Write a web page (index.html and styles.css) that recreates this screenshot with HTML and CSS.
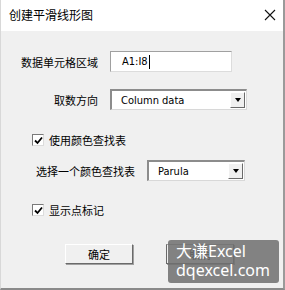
FILE: index.html
```html
<!DOCTYPE html>
<html>
<head>
<meta charset="utf-8">
<link rel="stylesheet" href="styles.css">
</head>
<body>
<div class="window">
  <div class="titlebar">
    <span class="title">创建平滑线形图</span>
    <svg class="close" width="12" height="12" viewBox="0 0 12 12"><path d="M1 1 L11 11 M11 1 L1 11" stroke="#111" stroke-width="1.1" fill="none"/></svg>
  </div>
  <div class="content">
    <div class="row row-range">
      <span class="label">数据单元格区域</span>
      <div class="textbox"><span class="val">A1:I8</span><span class="caret"></span></div>
    </div>
    <div class="row row-dir">
      <span class="label">取数方向</span>
      <div class="combo combo-wide"><span class="val">Column data</span><span class="drop"><span class="tri"></span></span></div>
    </div>
    <div class="check check-lut">
      <span class="box"><svg width="9" height="9" viewBox="0 0 9 9"><path d="M1 4.5 L3.5 7 L8 1.5" stroke="#000" stroke-width="1.8" fill="none"/></svg></span>
      <span class="ctext">使用颜色查找表</span>
    </div>
    <div class="row row-lut">
      <span class="label">选择一个颜色查找表</span>
      <div class="combo combo-narrow"><span class="val">Parula</span><span class="drop"><span class="tri"></span></span></div>
    </div>
    <div class="check check-mark">
      <span class="box"><svg width="9" height="9" viewBox="0 0 9 9"><path d="M1 4.5 L3.5 7 L8 1.5" stroke="#000" stroke-width="1.8" fill="none"/></svg></span>
      <span class="ctext">显示点标记</span>
    </div>
    <div class="buttons">
      <div class="btn btn-ok">确定</div>
      <div class="btn btn-cancel">取消</div>
    </div>
    <div class="watermark"><span>大谦Excel</span><span>dqexcel.com</span></div>
  </div>
</div>
</body>
</html>
```

FILE: styles.css
```css
* { box-sizing: border-box; }
html, body { margin: 0; padding: 0; }
body {
  width: 285px;
  height: 290px;
  overflow: hidden;
  background: #f0f0f0;
  font-family: "Noto Sans CJK SC", "Noto Sans", sans-serif;
  color: #000;
}
.window {
  width: 285px;
  height: 290px;
  display: flex;
  flex-direction: column;
  border-right: 2px solid #9a9a9a;
  border-bottom: 2px solid #8a8a8a;
  border-left: 1px solid #d8d8d8;
}
.titlebar {
  height: 31px;
  background: #fff;
  display: flex;
  align-items: center;
  justify-content: space-between;
  padding: 0 7px 1px 8px;
  flex: none;
}
.title { font-size: 12px; line-height: 14px; }
.close { display: block; }
.content {
  flex: 1;
  position: relative;
  padding-top: 20px;
  display: flex;
  flex-direction: column;
}
.row {
  display: flex;
  align-items: center;
}
.label {
  width: 97px;
  text-align: right;
  font-size: 11px;
  line-height: 14px;
  flex: none;
}
.row-range .label { margin-right: 12px; }
.row-dir { margin-top: 17px; }
.row-dir .label { margin-right: 12px; }
.textbox {
  width: 122px;
  height: 21px;
  background: #fff;
  border-top: 1px solid #a0a0a0;
  border-left: 1px solid #a0a0a0;
  border-right: 1px solid #dcdcdc;
  border-bottom: 1px solid #dcdcdc;
  display: flex;
  align-items: center;
  padding-left: 11px;
  font-family: "DejaVu Sans Condensed", "DejaVu Sans", sans-serif;
  font-size: 11px;
}
.caret { width: 1px; height: 14px; background: #000; margin-left: 1px; }
.combo {
  height: 21px;
  background: #fff;
  border-top: 2px solid #8c8c8c;
  border-left: 2px solid #8c8c8c;
  border-right: 1px solid #d8d8d8;
  border-bottom: 1px solid #d8d8d8;
  display: flex;
  align-items: center;
  justify-content: space-between;
  padding-left: 9px;
  padding-right: 1px;
  font-family: "DejaVu Sans Condensed", "DejaVu Sans", sans-serif;
  font-size: 11px;
}
.combo-wide { width: 137px; }
.combo-narrow { width: 98px; }
.drop {
  width: 15px;
  height: 16px;
  background: #f0f0f0;
  border-top: 1px solid #fff;
  border-left: 1px solid #fff;
  border-right: 1px solid #6a6a6a;
  border-bottom: 1px solid #6a6a6a;
  display: flex;
  align-items: center;
  justify-content: center;
}
.tri {
  width: 0; height: 0;
  border-left: 3.5px solid transparent;
  border-right: 3.5px solid transparent;
  border-top: 4px solid #000;
}
.check {
  display: flex;
  align-items: center;
  padding-left: 31px;
  font-size: 11px;
  line-height: 14px;
}
.check-lut { margin-top: 23px; }
.check-mark { margin-top: 22px; }
.box {
  width: 12px;
  height: 12px;
  background: #fff;
  border-top: 1px solid #7a7a7a;
  border-left: 1px solid #7a7a7a;
  border-right: 1px solid #dcdcdc;
  border-bottom: 1px solid #dcdcdc;
  display: flex;
  align-items: center;
  justify-content: center;
  margin-right: 5px;
}
.box svg { display: block; }
.row-lut { margin-top: 13px; }
.row-lut .label { width: auto; margin-left: 35px; margin-right: 12px; }
.buttons {
  display: flex;
  margin-top: 27px;
  padding-left: 64px;
  gap: 33px;
}
.btn {
  width: 68px;
  height: 20px;
  background: #f0f0f0;
  border-top: 1px solid #fff;
  border-left: 1px solid #fff;
  border-right: 1px solid #6a6a6a;
  border-bottom: 1px solid #6a6a6a;
  box-shadow: 1px 1px 0 #a0a0a0;
  font-size: 11px;
  display: flex;
  align-items: center;
  justify-content: center;
}
.btn-cancel {
  border-left: 1px solid #6a6a6a;
  border-top: 1px solid #a0a0a0;
}
.watermark {
  position: absolute;
  left: 167px;
  top: 209px;
  width: 111px;
  height: 43px;
  background: rgba(110, 110, 110, 0.85);
  border-radius: 3px;
  color: #fff;
  display: flex;
  flex-direction: column;
  padding-left: 8px;
  font-family: "Noto Sans", "Noto Sans CJK SC", sans-serif;
  font-size: 16px;
  line-height: 19px;
  padding-top: 2px;
}
```
